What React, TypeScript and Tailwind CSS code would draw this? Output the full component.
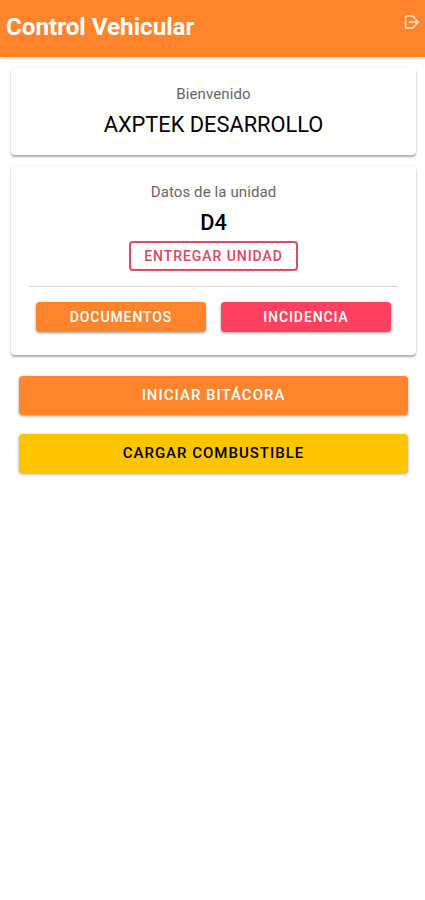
import React from 'react';

const App: React.FC = () => {
  return (
    <div className="flex h-screen flex-col overflow-hidden bg-white font-[Roboto,sans-serif] text-black">
      {/* Header */}
      <header className="flex h-[57px] shrink-0 items-start justify-between bg-[#ff842b] pl-[6px] pr-[5px] text-white shadow-[0_1px_3px_rgba(0,0,0,0.25)]">
        <h1 className="mt-[11px] text-[24.2px] font-bold leading-[32px]">Control Vehicular</h1>
        <svg className="mt-[14px] h-[16px] w-[16px] opacity-75" viewBox="0 0 16 16" fill="none" stroke="currentColor" strokeWidth="1.5" strokeLinecap="round" strokeLinejoin="round">
          <path d="M11 4.500 9.800 3Q9 2 7.800 2H3Q1.500 2 1.500 3.500v9Q1.500 14 3 14h4.800q1.200 0 2-1l1.200-1.500M5.500 8H12" />
          <path d="M12 5.500 14.500 8 12 10.500z" fill="currentColor" />
        </svg>
      </header>

      <main className="pl-[11px] pr-[9px] pt-[11px]">
        {/* Welcome */}
        <section className="h-[87px] rounded-[4px] bg-white pt-[15px] text-center shadow-[0_2px_2px_rgba(0,0,0,0.3),0_0_2px_rgba(0,0,0,0.12)]">
          <p className="text-[15px] leading-[22px] tracking-[0.1px] text-[#666]">Bienvenido</p>
          <h2 className="mt-[5px] text-[21.8px] leading-[30px]">AXPTEK DESARROLLO</h2>
        </section>

        {/* Unit data */}
        <section className="mt-[11px] h-[189px] rounded-[4px] bg-white px-[18px] pt-[15px] text-center shadow-[0_2px_2px_rgba(0,0,0,0.3),0_0_2px_rgba(0,0,0,0.12)]">
          <p className="text-[15px] leading-[22px] tracking-[0.1px] text-[#666]">Datos de la unidad</p>
          <h2 className="mt-[5px] text-[21.8px] font-medium leading-[30px]">D4</h2>
          <button className="mx-auto mt-[3px] block h-[30px] w-[169px] rounded-[4px] border-2 border-[#e04c68] text-[14px] font-medium leading-[26px] tracking-[0.95px] text-[#e04662]">ENTREGAR UNIDAD</button>
          <div className="mt-[15px] flex gap-[15px] border-t border-[#d5d5d5] px-[7px] pt-[15px]">
            <button className="h-[30px] flex-1 rounded-[4px] bg-[#ff842b] text-[14px] font-medium tracking-[0.9px] text-white shadow-[0_1px_3px_rgba(0,0,0,0.4)]">DOCUMENTOS</button>
            <button className="h-[30px] flex-1 rounded-[4px] bg-[#ff405f] text-[14px] font-medium tracking-[0.9px] text-white shadow-[0_1px_3px_rgba(0,0,0,0.4)]">INCIDENCIA</button>
          </div>
        </section>

        {/* Main actions */}
        <div className="mt-[21px] flex flex-col gap-[19px] px-[8px]">
          <button className="h-[39px] rounded-[4px] bg-[#ff842b] text-[15px] font-medium tracking-[1px] text-white shadow-[0_1px_3px_rgba(0,0,0,0.4)]">INICIAR BITÁCORA</button>
          <button className="h-[39px] rounded-[4px] bg-[#fdc400] text-[15px] font-medium tracking-[1px] text-black shadow-[0_1px_3px_rgba(0,0,0,0.4)]">CARGAR COMBUSTIBLE</button>
        </div>
      </main>
    </div>
  );
};

export default App;
